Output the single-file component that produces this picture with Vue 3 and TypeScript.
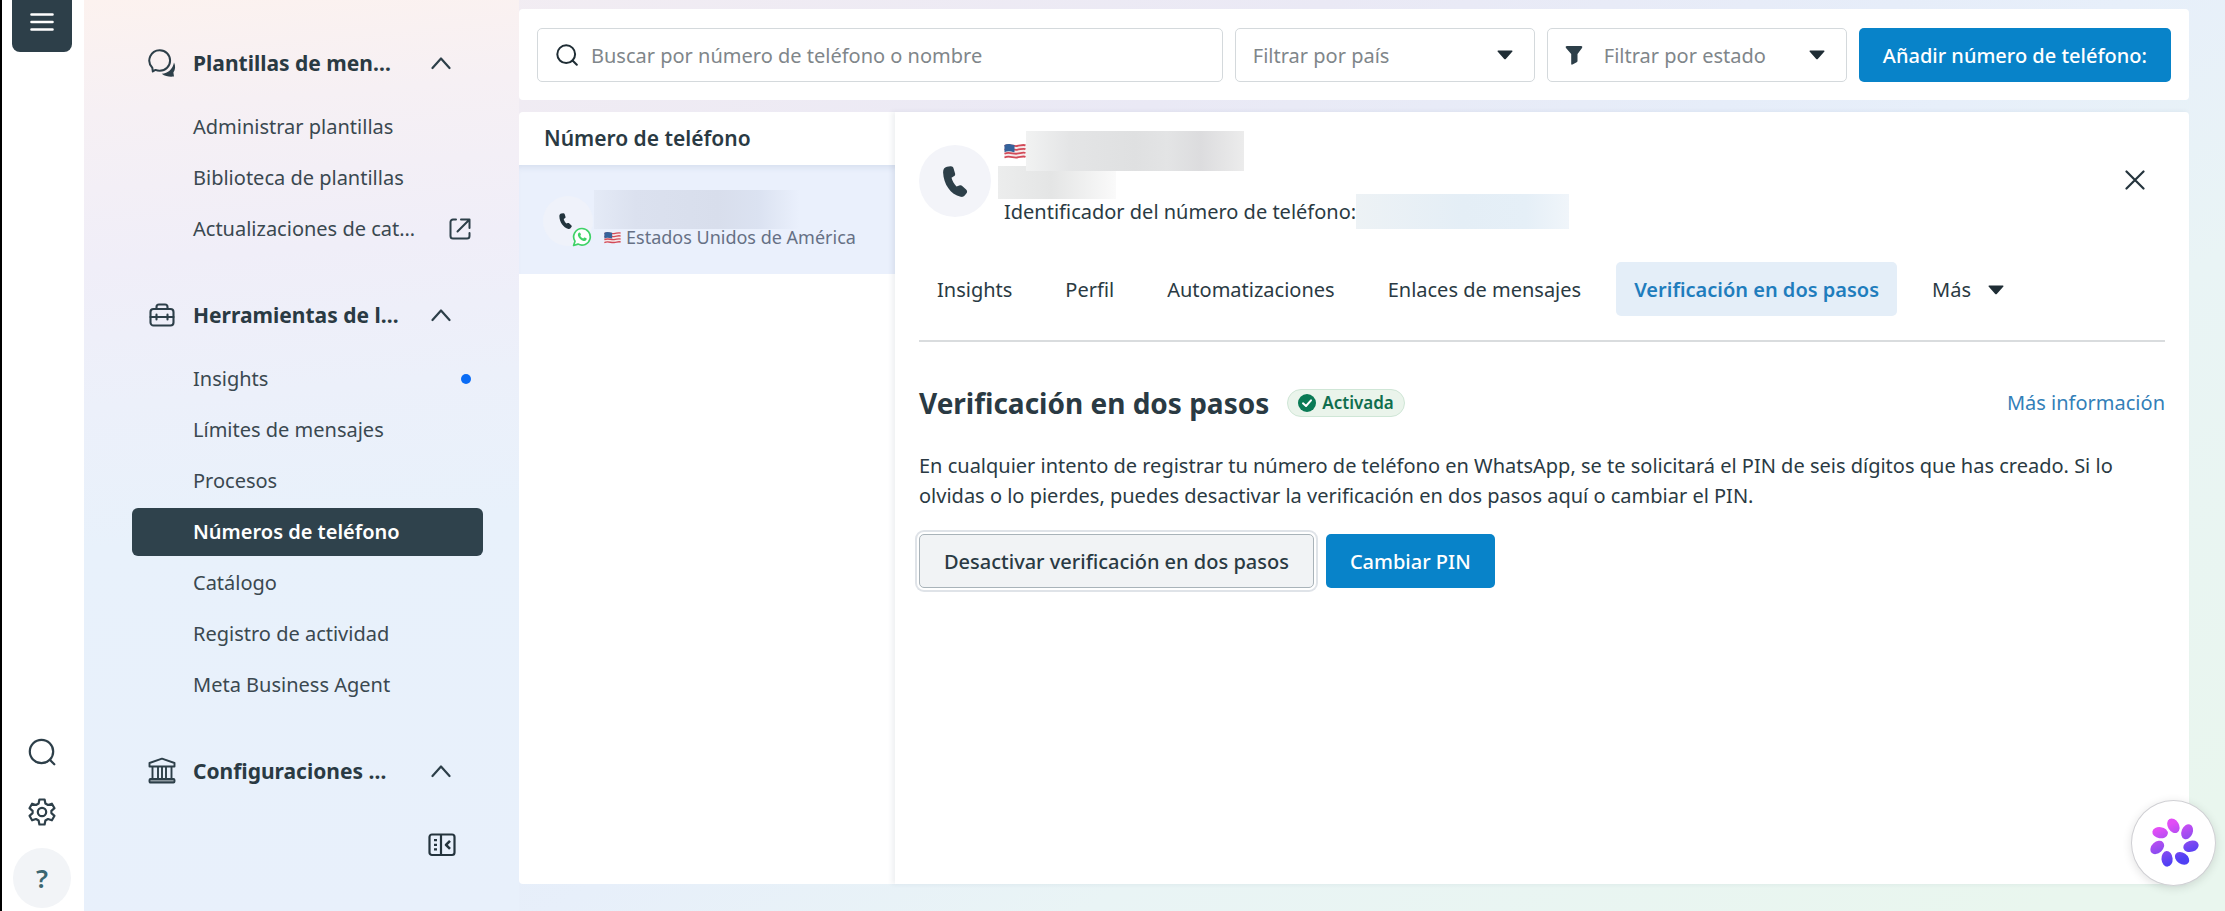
<script setup lang="ts">
import { ref } from 'vue'

interface NavItem {
  label: string
  external?: boolean
  dot?: boolean
}
interface NavGroup {
  title: string
  icon: 'chat' | 'toolbox' | 'bank'
  items: NavItem[]
}

const groups: NavGroup[] = [
  {
    title: 'Plantillas de men…',
    icon: 'chat',
    items: [
      { label: 'Administrar plantillas' },
      { label: 'Biblioteca de plantillas' },
      { label: 'Actualizaciones de cat…', external: true },
    ],
  },
  {
    title: 'Herramientas de l…',
    icon: 'toolbox',
    items: [
      { label: 'Insights', dot: true },
      { label: 'Límites de mensajes' },
      { label: 'Procesos' },
      { label: 'Números de teléfono' },
      { label: 'Catálogo' },
      { label: 'Registro de actividad' },
      { label: 'Meta Business Agent' },
    ],
  },
  { title: 'Configuraciones …', icon: 'bank', items: [] },
]
const activeItem = ref('Números de teléfono')

const tabs = ['Insights', 'Perfil', 'Automatizaciones', 'Enlaces de mensajes', 'Verificación en dos pasos']
const activeTab = ref('Verificación en dos pasos')

const query = ref('')
const country = ref('')
const status = ref('')

const petals = [0, 1, 2, 3, 4, 5, 6].map((i) => i * (360 / 7))
</script>

<template>
  <div class="app">
    <aside class="rail">
      <button class="rail-menu" type="button" aria-label="Menú">
        <svg width="24" height="20" viewBox="0 0 24 20"><path d="M1.5 2.5h21M1.5 10h21M1.5 17.5h21" stroke="#fff" stroke-width="2.6" stroke-linecap="round" /></svg>
      </button>
      <div class="rail-bottom">
        <button class="rail-btn" type="button" aria-label="Buscar">
          <svg width="28" height="28" viewBox="0 0 28 28" fill="none" stroke="#2d3f49" stroke-width="2.2" stroke-linecap="round"><circle cx="13.5" cy="13.5" r="11.7" /><path d="M21.8 21.8 26.3 26.3" /></svg>
        </button>
        <button class="rail-btn" type="button" aria-label="Configuración">
          <svg width="28" height="28" viewBox="0 0 28 28" fill="none" stroke="#2d3f49" stroke-width="2.2" stroke-linejoin="round">
            <path d="M11.4 1.5h5.2l.8 4 2.6 1.5 3.9-1.3 2.6 4.5-3.1 2.7v2.2l3.1 2.7-2.6 4.5-3.9-1.3-2.6 1.5-.8 4h-5.2l-.8-4L8 21l-3.9 1.3-2.6-4.5 3.1-2.7v-2.2L1.5 10.2l2.6-4.5L8 7l2.6-1.5z" />
            <circle cx="14" cy="14" r="4.2" />
          </svg>
        </button>
        <button class="rail-help" type="button" aria-label="Ayuda">?</button>
      </div>
    </aside>

    <nav class="sidebar" aria-label="WhatsApp Manager">
      <section v-for="g in groups" :key="g.title" class="group">
        <button class="group-head" type="button">
          <span class="group-icon">
            <svg v-if="g.icon === 'chat'" width="28" height="28" viewBox="0 0 28 28">
              <path d="M11.8 1.2a10.3 10.3 0 1 1 0 20.6c-1.6 0-3-.3-4.3-.9L4.8 22.400l-.5-3.700A10.300 10.300 0 0 1 11.800 1.200z" fill="none" stroke="#2d3f49" stroke-width="2" stroke-linejoin="round" />
              <path d="M26 13.500c1.700 3.300 1.400 7.100-.6 9.900l.6 4.100c-3.800.4-8.500.2-12.300-2.700 6.400-.4 11.100-4.900 12.300-11.300z" fill="#2d3f49" />
            </svg>
            <svg v-else-if="g.icon === 'toolbox'" width="28" height="28" viewBox="0 0 28 28" fill="none" stroke="#2d3f49" stroke-width="2.1" stroke-linejoin="round" stroke-linecap="round">
              <rect x="2.500" y="8" width="23" height="16.500" rx="3" />
              <path d="M8.500 8V6a2.500 2.500 0 0 1 2.500-2.500h6A2.500 2.500 0 0 1 19.500 6v2M2.500 16h23M8.500 13.500v5M19.500 13.500v5" />
            </svg>
            <svg v-else width="28" height="28" viewBox="0 0 28 28" fill="none" stroke="#2d3f49" stroke-width="1.900" stroke-linejoin="round">
              <path d="M1.500 6 14 1.600 26.500 6v3.500h-25z" />
              <path d="M4.500 9.500v12M10 9.500v12M14 9.500v12M18 9.500v12M23.500 9.500v12" />
              <rect x="1.500" y="22" width="25" height="3.500" rx="1" fill="#8b979e" />
            </svg>
          </span>
          <span class="group-title">{{ g.title }}</span>
          <svg class="chevron" width="20" height="14" viewBox="0 0 20 14" fill="none" stroke="#2d3f49" stroke-width="2.200" stroke-linecap="round" stroke-linejoin="round"><path d="M1.500 12 10 2.500 18.500 12" /></svg>
        </button>
        <ul v-if="g.items.length" class="items">
          <li v-for="item in g.items" :key="item.label">
            <a href="#" class="item" :class="{ active: item.label === activeItem }" @click.prevent="activeItem = item.label">
              <span>{{ item.label }}</span>
              <svg v-if="item.external" class="ext" width="22" height="22" viewBox="0 0 22 22" fill="none" stroke="#2d3f49" stroke-width="2" stroke-linecap="round" stroke-linejoin="round">
                <path d="M7 1.500H4A2.500 2.500 0 0 0 1.500 4v14A2.500 2.500 0 0 0 4 20.500h14a2.500 2.500 0 0 0 2.500-2.500v-3" />
                <path d="M12 1.500h8.500V10M20 2 8.500 13.500" />
              </svg>
              <i v-if="item.dot" class="dot"></i>
            </a>
          </li>
        </ul>
      </section>
      <button class="collapse" type="button" aria-label="Contraer menú">
        <svg width="28" height="24" viewBox="0 0 28 24" fill="none" stroke="#24343d" stroke-width="2.200" stroke-linejoin="round">
          <rect x="1.500" y="1.500" width="25" height="20.500" rx="2.500" />
          <path d="M13 1.500V22" />
          <path d="M22 7.800 18 11.800l4 4" stroke-width="2.600" />
          <path d="M6 7.200h3M6 11.800h3M6 16.400h3" />
        </svg>
      </button>
    </nav>

    <main class="main">
      <header class="toolbar">
        <div class="field search">
          <svg width="22" height="22" viewBox="0 0 22 22" fill="none" stroke="#1f2d35" stroke-width="2" stroke-linecap="round"><circle cx="10.200" cy="10.200" r="8.900" /><path d="M16.500 16.500 20.800 20.800" /></svg>
          <input v-model="query" type="text" aria-label="Buscar por número de teléfono o nombre" placeholder="Buscar por número de teléfono o nombre" />
        </div>
        <div class="field pick">
          <select v-model="country" aria-label="Filtrar por país"><option value="">Filtrar por país</option></select>
          <svg class="caret" width="16" height="10" viewBox="0 0 16 10"><path d="M1 .5h14a.6.6 0 0 1 .4 1L9 8.800a1.400 1.400 0 0 1-2 0L.6 1.500A.6.600 0 0 1 1 .5z" fill="#1f2d35" /></svg>
        </div>
        <div class="field pick with-icon">
          <svg class="funnel" width="18" height="20" viewBox="0 0 18 20"><path d="M2 1h14c1.300 0 1.600 1 1 1.900l-4.500 6V16c0 .6-.3 1-.8 1.300L7.500 19.500c-.8.400-1.300 0-1.300-.8V8.900L1 2.900C.4 2 .7 1 2 1z" fill="#2d3f49" /></svg>
          <select v-model="status" aria-label="Filtrar por estado"><option value="">Filtrar por estado</option></select>
          <svg class="caret" width="16" height="10" viewBox="0 0 16 10"><path d="M1 .5h14a.6.6 0 0 1 .4 1L9 8.800a1.400 1.400 0 0 1-2 0L.6 1.500A.6.600 0 0 1 1 .5z" fill="#1f2d35" /></svg>
        </div>
        <button class="btn primary" type="button">Añadir número de teléfono:</button>
      </header>

      <div class="panel">
        <section class="list">
          <h2 class="list-head">Número de teléfono</h2>
          <button class="row" type="button">
            <span class="row-avatar">
              <svg width="13" height="16" viewBox="0 0 25 31"><path d="M4.500.8 8 .3c1.500-.2 2.500.5 3 1.900l1.500 5c.4 1.400 0 2.400-1.200 3.100L9 11.800c1 3.600 2.600 6.300 5 8.700l2.800-1c1.200-.4 2.300-.2 3.200.7l3.600 3.400c1.200 1.200 1.300 2.500.4 3.700l-1.800 2.200c-1 1.200-2.400 1.700-4 1.300C8 28.500 1 18 .6 6.500.5 3.500 1.700 1.300 4.500.8z" fill="#22343d" /></svg>
              <svg class="wa" width="20" height="20" viewBox="0 0 20 20">
                <path d="M10 1.500a8.300 8.300 0 1 1-4 15.600L1.600 18.500l1.400-4.200A8.300 8.300 0 0 1 10 1.500z" fill="#fff" stroke="#3fd267" stroke-width="1.700" stroke-linejoin="round" />
                <path d="M7.200 5.500c.5-.2.900 0 1.100.4l.6 1.400c.1.300 0 .6-.2.900l-.5.600c.8 1.400 1.700 2.200 3 2.800l.8-.9c.2-.3.500-.3.800-.2l1.500.7c.4.200.5.500.4.900-.3 1.600-1.700 2.200-3.100 1.800-2.700-.7-4.800-2.700-5.600-5.200-.4-1.400.2-2.700 1.200-3.200z" fill="#3fd267" />
              </svg>
            </span>
            <span class="row-text">
              <span class="mask mask-name"></span>
              <span class="row-country">
                <svg class="flag" width="17" height="13" viewBox="0 0 22 16"><path d="M.5 2C5-.2 9 2.500 13 2s6-1.600 8.500-.7v13c-3-.8-5 .5-8.500.9s-8-2-12.500.3z" fill="#f6e9ea" /><path d="M.5 3C5 .8 9 3.500 13 3s6-1.600 8.500-.7M.5 6.800c4.500-2.200 8.500.5 12.500 0s6-1.600 8.500-.7M.5 10.700c4.500-2.200 8.500.5 12.500 0s6-1.600 8.500-.7M.5 14.500c4.500-2.200 8.500.5 12.500 0s6-1.600 8.500-.7" fill="none" stroke="#d24a58" stroke-width="1.800" /><path d="M.5 2C4-.1 7 1.500 10.500 1.900v7.300C7 8.800 4 7.400.5 9.200z" fill="#35629b" /></svg>
                Estados Unidos de América
              </span>
            </span>
          </button>
        </section>

        <section class="detail">
          <div class="detail-head">
            <span class="avatar">
              <svg width="26" height="31" viewBox="0 0 25 31"><path d="M4.500.8 8 .3c1.500-.2 2.500.5 3 1.900l1.500 5c.4 1.400 0 2.400-1.200 3.100L9 11.800c1 3.600 2.600 6.300 5 8.700l2.800-1c1.200-.4 2.300-.2 3.200.7l3.600 3.400c1.200 1.200 1.300 2.500.4 3.700l-1.800 2.200c-1 1.200-2.400 1.700-4 1.300C8 28.500 1 18 .6 6.500.5 3.500 1.700 1.300 4.500.8z" fill="#2d3f49" /></svg>
            </span>
            <div class="identity">
              <div class="id-line id-phone">
                <svg class="flag" width="22" height="16" viewBox="0 0 22 16"><path d="M.5 2C5-.2 9 2.500 13 2s6-1.600 8.500-.7v13c-3-.8-5 .5-8.500.9s-8-2-12.500.3z" fill="#f6e9ea" /><path d="M.5 3C5 .8 9 3.500 13 3s6-1.600 8.500-.7M.5 6.800c4.500-2.200 8.500.5 12.500 0s6-1.600 8.500-.7M.5 10.700c4.500-2.200 8.500.5 12.500 0s6-1.600 8.500-.7M.5 14.500c4.500-2.200 8.500.5 12.500 0s6-1.600 8.500-.7" fill="none" stroke="#d24a58" stroke-width="1.800" /><path d="M.5 2C4-.1 7 1.500 10.500 1.900v7.300C7 8.800 4 7.400.5 9.200z" fill="#35629b" /></svg>
                <span class="mask mask-phone"></span>
              </div>
              <span class="mask mask-alias"></span>
              <div class="id-line">Identificador del número de teléfono:<span class="mask mask-id"></span></div>
            </div>
            <button class="close" type="button" aria-label="Cerrar">
              <svg width="20" height="20" viewBox="0 0 20 20"><path d="M1.500 1.500l17 17M18.500 1.500l-17 17" stroke="#24343d" stroke-width="2.200" stroke-linecap="round" /></svg>
            </button>
          </div>

          <div class="tabs" role="tablist">
            <button v-for="t in tabs" :key="t" class="tab" :class="{ active: t === activeTab }" type="button" role="tab" :aria-selected="t === activeTab" @click="activeTab = t">{{ t }}</button>
            <button class="tab more" type="button">
              Más
              <svg width="16" height="10" viewBox="0 0 16 10"><path d="M1 .5h14a.6.6 0 0 1 .4 1L9 8.800a1.400 1.400 0 0 1-2 0L.6 1.500A.6.600 0 0 1 1 .5z" fill="#1f2d35" /></svg>
            </button>
          </div>

          <div class="title-row">
            <h1>Verificación en dos pasos</h1>
            <span class="badge">
              <svg width="18" height="18" viewBox="0 0 18 18"><circle cx="9" cy="9" r="9" fill="#0a7a55" /><path d="M5 9.300 8 12l5-5.700" fill="none" stroke="#fff" stroke-width="2" stroke-linecap="round" stroke-linejoin="round" /></svg>
              Activada
            </span>
            <a href="#" class="more-info">Más información</a>
          </div>
          <p class="desc">En cualquier intento de registrar tu número de teléfono en WhatsApp, se te solicitará el PIN de seis dígitos que has creado. Si lo olvidas o lo pierdes, puedes desactivar la verificación en dos pasos aquí o cambiar el PIN.</p>
          <div class="actions">
            <button class="btn secondary" type="button">Desactivar verificación en dos pasos</button>
            <button class="btn primary" type="button">Cambiar PIN</button>
          </div>
        </section>
      </div>
    </main>

    <button class="assistant" type="button" aria-label="Asistente">
      <svg width="50" height="50" viewBox="0 0 50 50">
        <defs>
          <linearGradient id="petal" gradientUnits="userSpaceOnUse" x1="16" y1="8" x2="30" y2="42">
            <stop offset="0" stop-color="#e24ef6" /><stop offset=".5" stop-color="#9a4df0" /><stop offset="1" stop-color="#5040f4" />
          </linearGradient>
          <mask id="petals" maskUnits="userSpaceOnUse" x="0" y="0" width="50" height="50">
            <ellipse v-for="a in petals" :key="a" cx="25" cy="7.700" rx="5.600" ry="7.800" fill="#fff" :transform="`rotate(${a - 2} 25 25) rotate(-28 25 7.700)`" />
          </mask>
        </defs>
        <rect width="50" height="50" fill="url(#petal)" mask="url(#petals)" />
      </svg>
    </button>
  </div>
</template>

<style>
body {
  margin: 0;
}
</style>

<style scoped>
.app {
  display: flex;
  min-height: 100vh;
  box-sizing: border-box;
  border-left: 2px solid #000;
  color: #2a3a43;
  font-family: "Noto Sans", "Open Sans", sans-serif;
  font-size: 20px;
  line-height: 30px;
  background: linear-gradient(150deg, #f3edf2 10%, #eae9f5 35%, #e6edf9 50%, #e7effa 56%, #e9f4f5 70%, #e9f6ee 95%);
}
.app *,
.app *::before {
  box-sizing: border-box;
}
button,
input,
select {
  font: inherit;
  color: inherit;
}
button {
  padding: 0;
  border: 0;
  background: none;
  cursor: pointer;
}
svg {
  display: block;
  flex: none;
}

.rail {
  display: flex;
  flex-direction: column;
  flex: none;
  justify-content: space-between;
  align-items: center;
  width: 82px;
  padding: 0 2px 3px 0;
  background: #fff;
}
.rail-menu {
  display: flex;
  align-items: center;
  justify-content: center;
  width: 60px;
  height: 52px;
  padding-bottom: 8px;
  border-radius: 0 0 8px 8px;
  background: #2d3f49;
}
.rail-bottom {
  display: flex;
  flex-direction: column;
  align-items: center;
}
.rail-btn {
  display: flex;
  align-items: center;
  justify-content: center;
  width: 60px;
  height: 60px;
}
.rail-help {
  width: 58px;
  height: 60px;
  margin-top: 6px;
  border-radius: 50%;
  background: #f2f4f7;
  color: #3b6670;
  font-size: 26px;
  font-weight: 600;
}

.sidebar {
  flex: none;
  width: 435px;
  padding: 38px 36px 0 48px;
  background: linear-gradient(175deg, #fcf2ef 0, #f6f0f4 12%, #f0eef8 28%, #ecf0fa 43%, #e8f1fb 58%, #e8f0fb 100%);
}
.group {
  margin-bottom: 37px;
}
.group-head {
  display: flex;
  align-items: center;
  width: 100%;
  height: 50px;
  padding: 0 32px 0 16px;
  text-align: left;
}
.group-icon {
  width: 45px;
}
.group-title {
  flex: 1;
  font-size: 21px;
  font-weight: 700;
  white-space: nowrap;
}
.items {
  display: flex;
  flex-direction: column;
  gap: 3px;
  margin: 15px 0 0;
  padding: 0;
  list-style: none;
}
.item {
  display: flex;
  align-items: center;
  justify-content: space-between;
  height: 48px;
  padding: 0 12px 0 61px;
  border-radius: 6px;
  color: #3a4850;
  text-decoration: none;
  white-space: nowrap;
}
.item.active {
  background: #2f424c;
  color: #fff;
  font-weight: 600;
}
.dot {
  width: 10px;
  height: 10px;
  border-radius: 50%;
  background: #0a6cf5;
}
.collapse {
  display: block;
  margin: 0 0 0 296px;
}

.main {
  display: flex;
  flex: 1;
  flex-direction: column;
  gap: 12px;
  min-width: 0;
  padding: 9px 36px 27px 0;
}
.toolbar {
  display: flex;
  gap: 12px;
  padding: 19px 18px 18px;
  border-radius: 4px;
  background: #fff;
}
.field {
  position: relative;
  display: flex;
  align-items: center;
  height: 54px;
  border: 1px solid #d4d9dc;
  border-radius: 5px;
  background: #fff;
}
.search {
  flex: 1;
  gap: 13px;
  padding: 0 18px;
}
.search input {
  flex: 1;
  min-width: 0;
  padding: 2px 0 0;
  border: 0;
  outline: 0;
  background: none;
}
.search input::placeholder {
  color: #7f868a;
  opacity: 1;
}
.pick {
  width: 300px;
}
.pick select {
  width: 100%;
  height: 100%;
  padding: 2px 48px 0 17px;
  border: 0;
  outline: 0;
  background: none;
  color: #7f868a;
  appearance: none;
}
.with-icon select {
  padding-left: 56px;
}
.caret {
  position: absolute;
  right: 21px;
  pointer-events: none;
}
.funnel {
  position: absolute;
  left: 17px;
}
.btn {
  height: 54px;
  padding: 2px 24px 0;
  border-radius: 5px;
  font-weight: 500;
  white-space: nowrap;
}
.primary {
  background: #0883c9;
  color: #fff;
}
.panel {
  display: flex;
  flex: 1;
  border-radius: 4px;
  background: #fff;
}
.list {
  flex: none;
  width: 376px;
}
.list-head {
  margin: 0;
  padding: 11px 25px 12px;
  font-size: 21px;
  font-weight: 600;
  line-height: 30px;
}
.row {
  display: flex;
  gap: 1px;
  width: 100%;
  height: 109px;
  padding: 25px 24px 0;
  background: #eaf0fc;
  box-shadow: inset 0 6px 6px -4px rgba(60, 80, 120, 0.12);
  text-align: left;
}
.row-avatar {
  position: relative;
  display: flex;
  align-items: center;
  justify-content: center;
  width: 50px;
  height: 50px;
  margin-top: 6px;
  padding-right: 6px;
  border-radius: 50%;
  background: #eff2fa;
}
.wa {
  position: absolute;
  right: 1px;
  bottom: -1px;
}
.mask {
  display: block;
  flex: none;
}
.mask-name {
  width: 206px;
  height: 39px;
  background: linear-gradient(90deg, #e4eaf6, #dbe1ef 20%, #d8deec 60%, #dbe2f1 80%, #eaf0fc);
}
.row-country {
  display: flex;
  align-items: center;
  gap: 5px;
  padding-left: 10px;
  color: #667085;
  font-size: 18px;
  line-height: 16px;
  white-space: nowrap;
}
.detail {
  flex: 1;
  min-width: 0;
  padding: 19px 24px 32px;
  box-shadow: -3px 0 5px rgba(40, 60, 90, 0.08);
}
.detail-head {
  display: flex;
}
.avatar {
  display: flex;
  align-items: center;
  justify-content: center;
  flex: none;
  width: 72px;
  height: 72px;
  margin: 14px 7px 0 0;
  border-radius: 50%;
  background: #f3f4f9;
}
.identity {
  flex: 1;
}
.id-line {
  display: flex;
  align-items: center;
  height: 35px;
  padding-left: 6px;
  white-space: nowrap;
}
.id-phone {
  height: 40px;
}
.mask-phone {
  width: 218px;
  height: 40px;
  background: linear-gradient(90deg, #f1f2f2, #e4e5e6 20%, #dfe0e1 50%, #e3e4e5 65%, #dcdcde 80%, #ececec);
}
.mask-alias {
  width: 118px;
  height: 33px;
  margin: -5px 0;
  background: linear-gradient(90deg, #eceded, #e4e5e5 45%, #fafafa);
}
.mask-id {
  width: 213px;
  height: 35px;
  background: linear-gradient(90deg, #edf2f5, #e4eef6 50%, #e5eff7 80%, #f0f5fa);
}
.close {
  align-self: center;
  margin-right: 20px;
}
.tabs {
  display: flex;
  gap: 17px;
  margin-top: 33px;
  padding-bottom: 24px;
  border-bottom: 2px solid #d9dcde;
}
.tab {
  height: 54px;
  padding: 2px 18px 0;
  border-radius: 5px;
  white-space: nowrap;
}
.tab.active {
  background: #e4eef8;
  color: #1f7dbd;
  font-weight: 600;
}
.more {
  display: flex;
  align-items: center;
  gap: 17px;
}
.title-row {
  display: flex;
  align-items: center;
  gap: 18px;
  height: 40px;
  margin-top: 41px;
}
h1 {
  margin: 0;
  font-size: 28px;
  font-weight: 700;
  line-height: 40px;
  white-space: nowrap;
}
.badge {
  display: flex;
  align-items: center;
  gap: 6px;
  height: 28px;
  padding: 0 10px;
  border: 1px solid #cfe6d6;
  border-radius: 14px;
  background: #eaf4eb;
  color: #0f6e4e;
  font-size: 17px;
  font-weight: 600;
}
.more-info {
  margin-left: auto;
  color: #337fb8;
  text-decoration: none;
}
.desc {
  margin: 28px 0 0;
}
.actions {
  display: flex;
  gap: 12px;
  margin-top: 23px;
}
.secondary {
  border: 1px solid #a9b3b9;
  background: #f1f3f5;
  box-shadow: 0 0 0 2px #fff, 0 0 0 4px #dfe3e8;
}
.assistant {
  position: fixed;
  right: 9px;
  bottom: 25px;
  display: flex;
  align-items: center;
  justify-content: center;
  width: 85px;
  height: 86px;
  border: 1px solid #d0d0d4;
  border-radius: 50%;
  background: #fff;
  box-shadow: 0 2px 10px rgba(0, 0, 0, 0.12);
}
</style>
